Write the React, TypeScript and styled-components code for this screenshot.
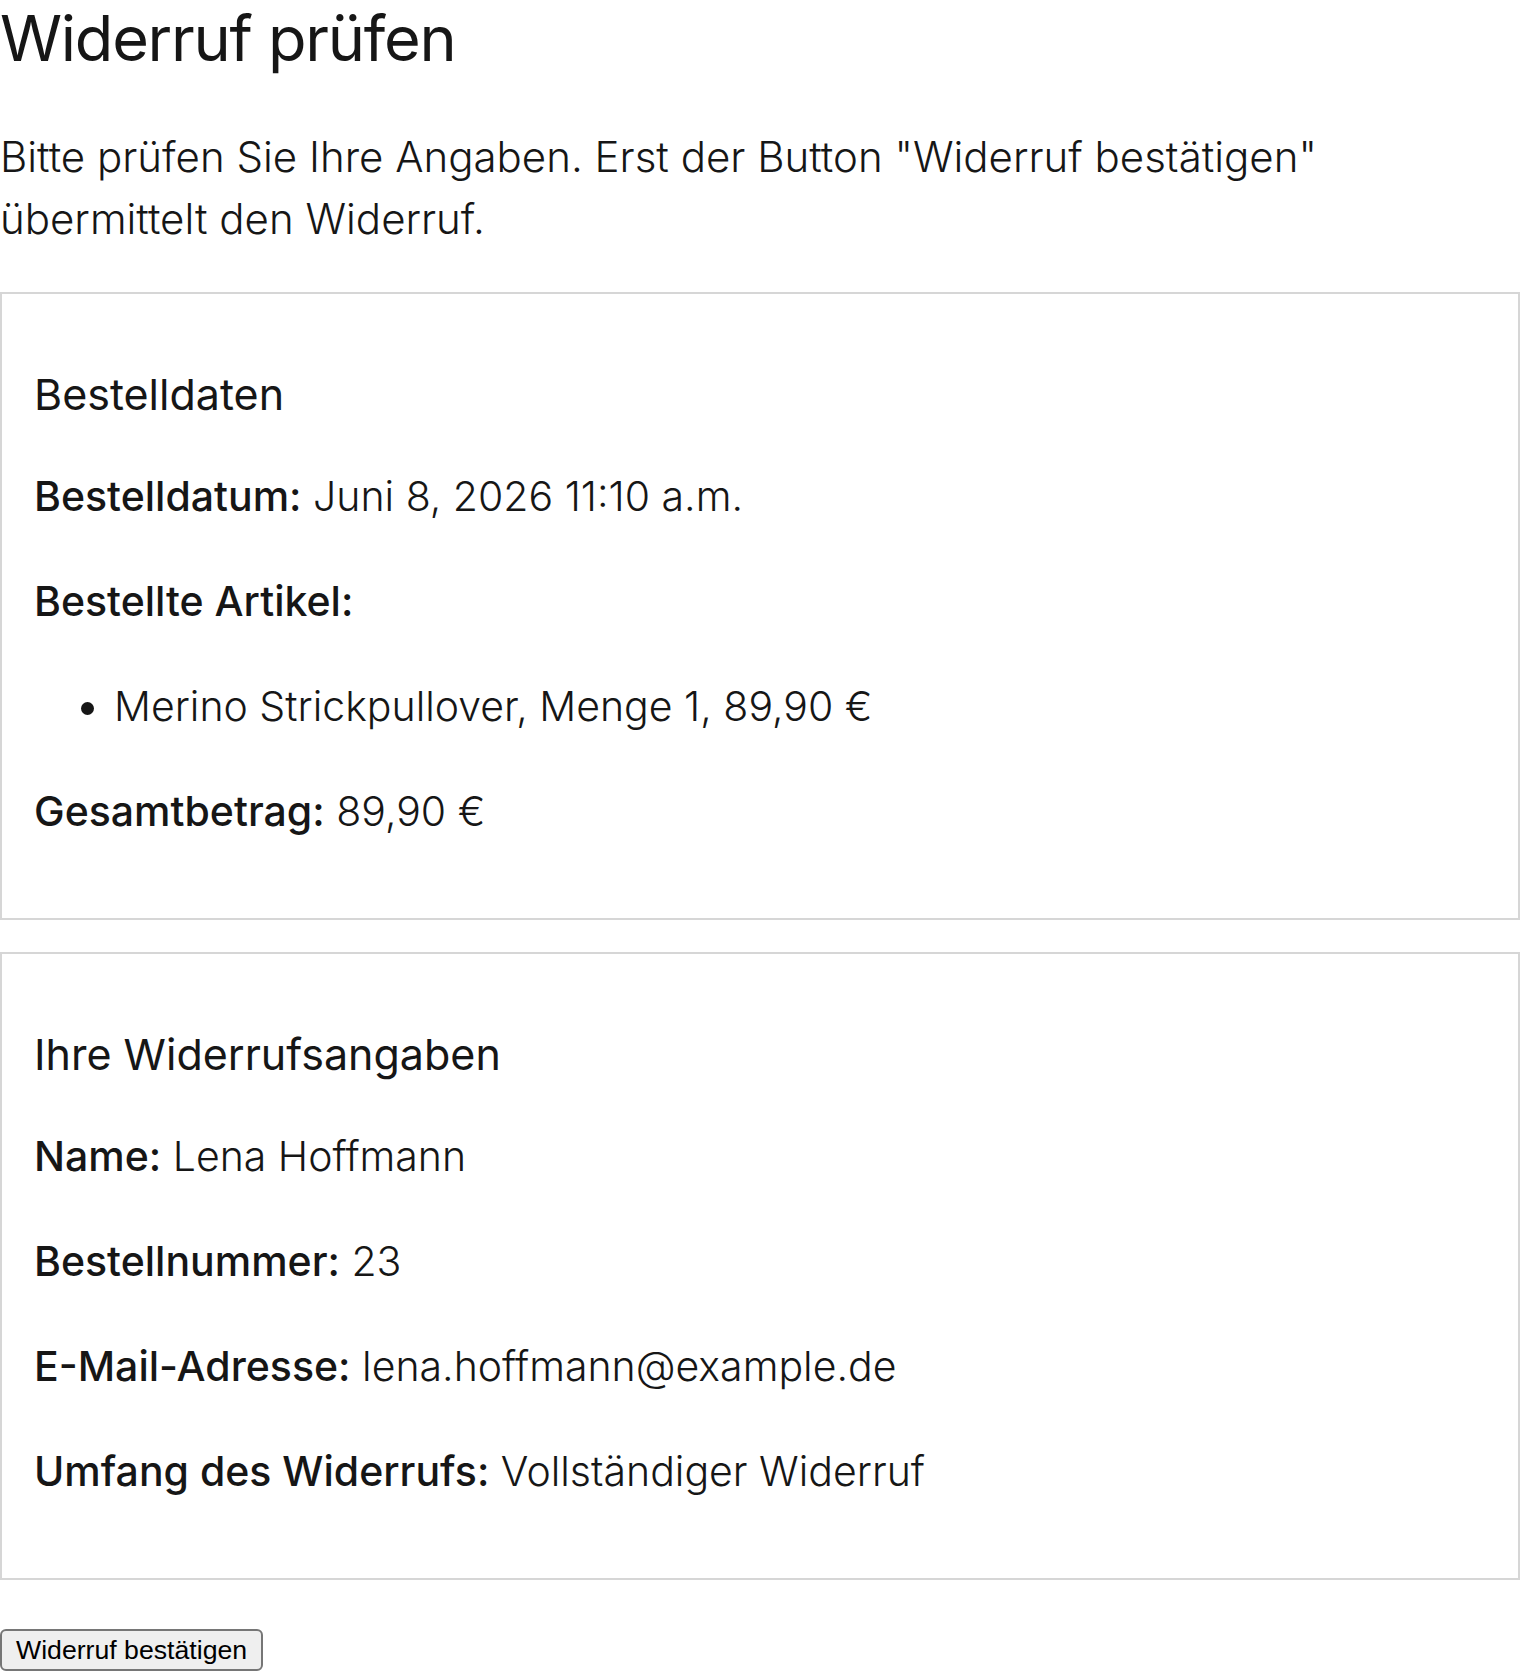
import React from "react";
import styled, { createGlobalStyle } from "styled-components";

const GlobalStyle = createGlobalStyle`
  html, body {
    margin: 0;
    padding: 0;
    background: #ffffff;
  }
  body {
    font-family: Inter, "Noto Sans", sans-serif;
    color: #161616;
    font-size: 41px;
    line-height: 62px;
    font-weight: 300;
  }
`;

const Page = styled.main`
  display: flex;
  flex-direction: column;
  align-items: flex-start;
`;

const Title = styled.h1`
  font-size: 63px;
  line-height: 77px;
  font-weight: 400;
  letter-spacing: -0.02em;
  margin: 0 0 49px;
`;

const Intro = styled.p`
  font-size: 42px;
  margin: 0 0 42px;
  max-width: 1400px;
`;

const Card = styled.section`
  align-self: stretch;
  border: 2px solid #d6d6d6;
  padding: 72px 32px 76px;
  margin-bottom: 32px;
  display: flex;
  flex-direction: column;
  gap: 43px;
`;

const CardTitle = styled.h2`
  font-size: 43px;
  line-height: 56px;
  font-weight: 400;
  margin: 0;
`;

const Row = styled.p`
  margin: 0;
`;

const Label = styled.span`
  font-weight: 500;
`;

const Items = styled.ul`
  margin: 0;
  padding-left: 80px;
`;

const Item = styled.li`
  padding-left: 0;
`;

const ConfirmButton = styled.button`
  margin-top: 17px;
  font-family: "Liberation Sans", Arial, sans-serif;
  font-size: 26.67px;
  line-height: 32px;
  color: #000;
  background: #efefef;
  border: 2px solid #767676;
  border-radius: 6px;
  padding: 3px 14px;
`;

export default function App() {
  return (
    <>
      <GlobalStyle />
      <Page>
        <Title>Widerruf prüfen</Title>
        <Intro>
          Bitte prüfen Sie Ihre Angaben. Erst der Button "Widerruf bestätigen"
          übermittelt den Widerruf.
        </Intro>

        <Card>
          <CardTitle>Bestelldaten</CardTitle>
          <Row>
            <Label>Bestelldatum:</Label> Juni 8, 2026 11:10 a.m.
          </Row>
          <Row>
            <Label>Bestellte Artikel:</Label>
          </Row>
          <Items>
            <Item>Merino Strickpullover, Menge 1, 89,90 €</Item>
          </Items>
          <Row>
            <Label>Gesamtbetrag:</Label> 89,90 €
          </Row>
        </Card>

        <Card>
          <CardTitle>Ihre Widerrufsangaben</CardTitle>
          <Row>
            <Label>Name:</Label> Lena Hoffmann
          </Row>
          <Row>
            <Label>Bestellnummer:</Label> 23
          </Row>
          <Row>
            <Label>E-Mail-Adresse:</Label> lena.hoffmann@example.de
          </Row>
          <Row>
            <Label>Umfang des Widerrufs:</Label> Vollständiger Widerruf
          </Row>
        </Card>

        <ConfirmButton type="button">Widerruf bestätigen</ConfirmButton>
      </Page>
    </>
  );
}
